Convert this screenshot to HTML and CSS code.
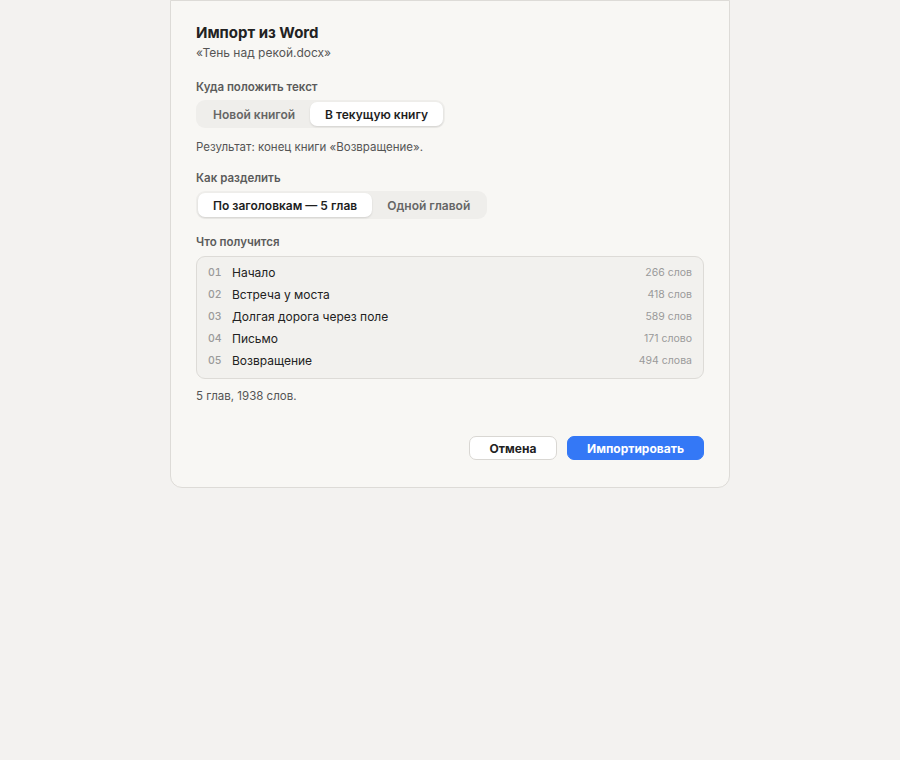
FILE: index.html
```html
<!DOCTYPE html>
<html lang="ru">
<head>
<meta charset="utf-8">
<link rel="stylesheet" href="styles.css">
</head>
<body>
<div class="dialog">
  <h1 class="title">Импорт из Word</h1>
  <div class="subtitle">«Тень над рекой.docx»</div>

  <div class="label">Куда положить текст</div>
  <div class="seg">
    <button class="seg-btn">Новой книгой</button>
    <button class="seg-btn active">В текущую книгу</button>
  </div>
  <div class="note">Результат: конец книги «Возвращение».</div>

  <div class="label">Как разделить</div>
  <div class="seg">
    <button class="seg-btn active">По заголовкам — 5 глав</button>
    <button class="seg-btn">Одной главой</button>
  </div>

  <div class="label">Что получится</div>
  <div class="list">
    <div class="row"><span class="num">01</span><span class="name">Начало</span><span class="count">266 слов</span></div>
    <div class="row"><span class="num">02</span><span class="name">Встреча у моста</span><span class="count">418 слов</span></div>
    <div class="row"><span class="num">03</span><span class="name">Долгая дорога через поле</span><span class="count">589 слов</span></div>
    <div class="row"><span class="num">04</span><span class="name">Письмо</span><span class="count">171 слово</span></div>
    <div class="row"><span class="num">05</span><span class="name">Возвращение</span><span class="count">494 слова</span></div>
  </div>
  <div class="summary">5 глав, 1938 слов.</div>

  <div class="actions">
    <button class="btn btn-cancel">Отмена</button>
    <button class="btn btn-primary">Импортировать</button>
  </div>
</div>
</body>
</html>
```

FILE: styles.css
```css
* { box-sizing: border-box; }
html, body {
  margin: 0;
  padding: 0;
  background: #f3f2f0;
  font-family: Inter, "Noto Sans", sans-serif;
  color: #1f1f1f;
}
.dialog {
  width: 560px;
  margin: 0 auto;
  background: #f8f7f4;
  border: 1px solid #dddbd7;
  border-radius: 0 0 12px 12px;
  padding: 22px 25px 27px 25px;
}
.title {
  margin: 0;
  font-size: 15px;
  font-weight: 700;
  line-height: 20px;
  color: #222;
}
.subtitle {
  font-size: 12px;
  line-height: 18px;
  color: #555;
  margin-top: 1px;
}
.label {
  font-size: 11.5px;
  font-weight: 600;
  color: #5b5b5b;
  line-height: 16px;
  margin-top: 17px;
}
.seg {
  display: inline-flex;
  margin-top: 5px;
  padding: 2px;
  background: #efeeeb;
  border-radius: 9px;
}
.seg-btn {
  font-family: inherit;
  font-size: 12px;
  font-weight: 600;
  color: #666;
  background: transparent;
  border: 0;
  border-radius: 7px;
  height: 24px;
  padding: 0 15px;
  cursor: pointer;
}
.seg-btn.active {
  background: #fff;
  color: #1e1e1e;
  box-shadow: 0 1px 2px rgba(0,0,0,0.12);
}
.note {
  font-size: 11.5px;
  color: #555;
  line-height: 16px;
  margin-top: 11px;
}
.note + .label { margin-top: 15px; }
.seg + .label { margin-top: 15px; }
.list {
  margin-top: 6px;
  background: #f2f1ee;
  border: 1px solid #dddbd7;
  border-radius: 9px;
  padding: 4px 11px 7px 11px;
}
.row {
  display: flex;
  align-items: center;
  height: 22px;
}
.num {
  width: 24px;
  font-size: 10.5px;
  font-weight: 500;
  color: #9a9a9a;
  font-variant-numeric: tabular-nums;
}
.name {
  flex: 1;
  font-size: 12px;
  color: #222;
}
.count {
  font-size: 10.5px;
  color: #9a9a9a;
}
.summary {
  font-size: 11.5px;
  color: #555;
  margin-top: 9px;
  line-height: 16px;
}
.actions {
  display: flex;
  justify-content: flex-end;
  gap: 10px;
  margin-top: 32px;
}
.btn {
  font-family: inherit;
  font-size: 12px;
  font-weight: 700;
  height: 24px;
  border-radius: 7px;
  cursor: pointer;
}
.btn-cancel {
  width: 88px;
  background: #fff;
  color: #222;
  border: 1px solid #d9d7d3;
}
.btn-primary {
  width: 137px;
  background: #3478f6;
  color: #fff;
  border: 1px solid #3478f6;
}
```
